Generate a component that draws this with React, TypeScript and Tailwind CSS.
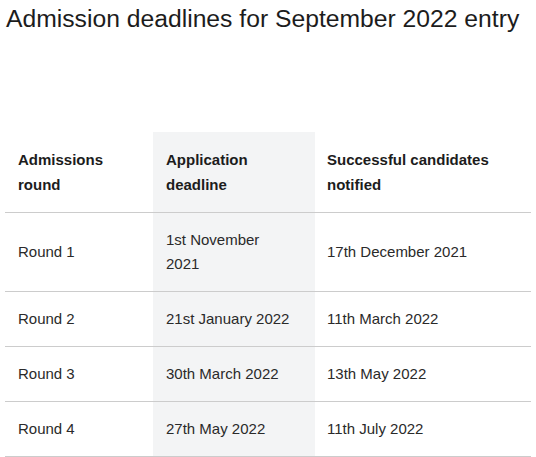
const rows = [
  { round: "Round 1", deadline: "1st November 2021", notified: "17th December 2021" },
  { round: "Round 2", deadline: "21st January 2022", notified: "11th March 2022" },
  { round: "Round 3", deadline: "30th March 2022", notified: "13th May 2022" },
  { round: "Round 4", deadline: "27th May 2022", notified: "11th July 2022" },
];

export default function App() {
  return (
    <div className="w-[536px] h-[457px] bg-white font-['Liberation_Sans',Arial,sans-serif] text-[#1c1c1c] overflow-hidden">
      <h1 className="pl-[6px] pt-[3px] text-[24.7px] leading-[32px] font-normal">
        Admission deadlines for September 2022 entry
      </h1>
      <table className="ml-[5px] mt-[97px] w-[526px] border-collapse table-fixed">
        <colgroup>
          <col className="w-[148px]" />
          <col className="w-[162px]" />
          <col className="w-[216px]" />
        </colgroup>
        <thead>
          <tr className="border-b border-[#cccccc]">
            <th className="px-[13px] py-[15px] text-left align-middle font-bold text-[15px] leading-[25px]">
              Admissions
              <br />
              round
            </th>
            <th className="px-[13px] py-[15px] text-left align-middle font-bold text-[15px] leading-[25px] bg-[#f3f4f5]">
              Application
              <br />
              deadline
            </th>
            <th className="px-[12px] py-[15px] text-left align-middle font-bold text-[15px] leading-[25px]">
              Successful candidates
              <br />
              notified
            </th>
          </tr>
        </thead>
        <tbody>
          {rows.map(r => (
            <tr key={r.round} className="border-b border-[#cccccc] text-[15px] leading-6 text-[#2a2a2a]">
              <td className="px-[13px] py-[15px] align-middle">{r.round}</td>
              <td className="px-[13px] py-[15px] align-middle bg-[#f3f4f5]">
                {r.round === "Round 1" ? (
                  <>
                    1st November
                    <br />
                    2021
                  </>
                ) : (
                  r.deadline
                )}
              </td>
              <td className="px-[12px] py-[15px] align-middle">{r.notified}</td>
            </tr>
          ))}
        </tbody>
      </table>
    </div>
  );
}
